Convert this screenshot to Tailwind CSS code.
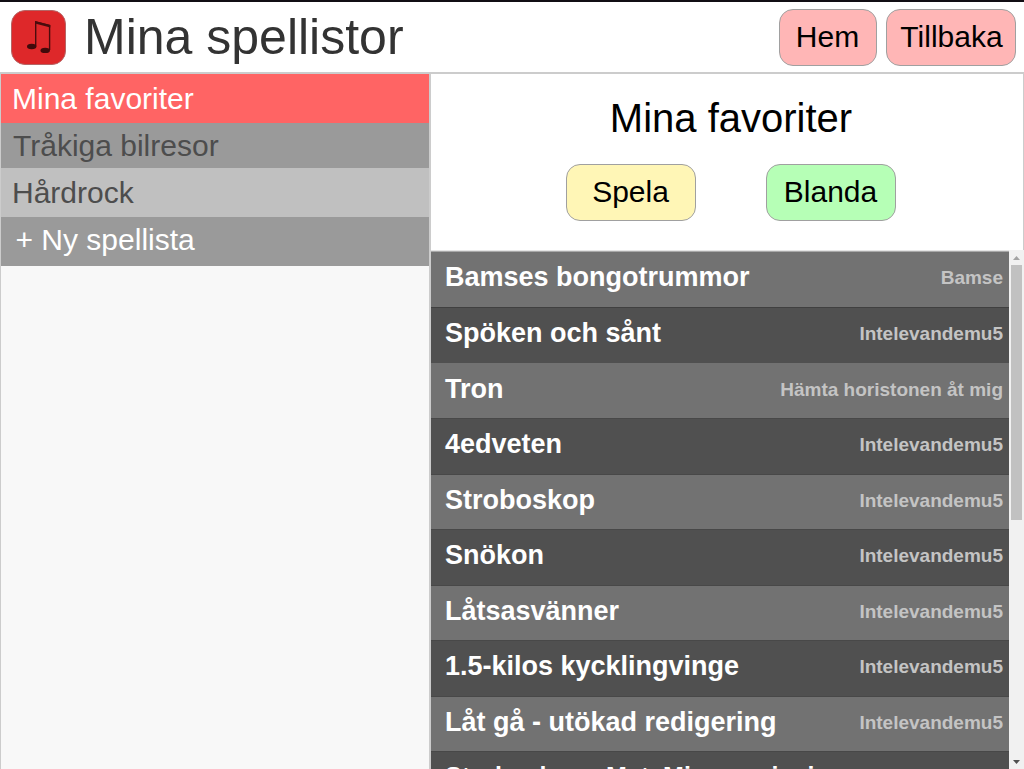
<!DOCTYPE html>
<html lang="sv">
<head>
<meta charset="utf-8">
<title>Mina spellistor</title>
<script src="https://cdn.jsdelivr.net/npm/@tailwindcss/browser@4"></script>
</head>
<body class="h-[769px] w-[1024px] overflow-hidden bg-white font-['Liberation_Sans',Arial,sans-serif]">
<div class="flex h-full flex-col border-t-2 border-[#110e14]">
  <header class="flex h-[70px] shrink-0 items-start pl-[11px] pr-2 pt-[7px]">
    <svg class="mt-px h-[55px] w-[55px] shrink-0" viewBox="0 0 55 55">
      <rect x=".5" y=".5" width="54" height="54" rx="13.5" fill="#de282a" stroke="#b56565"/>
      <path d="M24.7 36.5V12L38.6 15.6V40" fill="none" stroke="#4a0c0d" stroke-width="1.4"/>
      <path d="M24 11L39.3 15.1V17.6L24 13.4Z" fill="#4a0c0d"/>
      <ellipse cx="20.7" cy="36.5" rx="4.7" ry="2.7" fill="#400a0b"/>
      <ellipse cx="34.2" cy="40.4" rx="4.7" ry="2.7" fill="#400a0b"/>
    </svg>
    <h1 class="ml-[18px] text-[50px] leading-[56px] text-[#333]">Mina spellistor</h1>
    <nav class="ml-auto flex gap-[9px] text-[30px] leading-[54px]">
      <button class="h-[57px] w-[98px] rounded-[14px] border border-[#a0a0a0] bg-[#ffb6b6] pb-[2px] pr-px">Hem</button>
      <button class="h-[57px] w-[130px] rounded-[14px] border border-[#a0a0a0] bg-[#ffb6b6] pb-[2px] pl-px">Tillbaka</button>
    </nav>
  </header>
  <main class="flex min-h-0 flex-1">
    <aside class="w-[430px] shrink-0 border-t-2 border-r border-l border-[#ccc] bg-[#f8f8f8] text-[30px]">
      <div class="h-[49px] bg-[#ff6464] pl-[11px] leading-[50px] text-white">Mina favoriter</div>
      <div class="h-[45px] bg-[#9a9a9a] pl-3 leading-[46px] text-[#4d4d4d]">Tråkiga bilresor</div>
      <div class="h-[49px] bg-[#c0c0c0] pl-[11px] leading-[50px] text-[#4d4d4d]">Hårdrock</div>
      <div class="h-[49px] bg-[#9a9a9a] pl-[14.5px] leading-[46px] text-white">+ Ny spellista</div>
    </aside>
    <section class="flex min-w-0 flex-1 flex-col border-l border-[#ccc]">
      <div class="h-[178px] shrink-0 border-t-2 border-r border-[#ccc] pl-2 pt-[21px] text-center">
        <h2 class="text-[40px] leading-[46px]">Mina favoriter</h2>
        <div class="mt-[23px] flex justify-center gap-[70px] text-[30px] leading-[54px]">
          <button class="h-[57px] w-[130px] rounded-[14px] border border-[#a0a0a0] bg-[#fff6b6] pb-[2px] pr-px">Spela</button>
          <button class="h-[57px] w-[130px] rounded-[14px] border border-[#a0a0a0] bg-[#b6ffb6] pb-[2px] pr-px">Blanda</button>
        </div>
      </div>
      <div class="flex min-h-0 flex-1">
        <div class="min-w-0 flex-1 overflow-hidden border-t border-[#e4e4e4] text-[27px] font-bold text-white">
          <div class="flex h-[56px] justify-between border-t border-[#a8a8a8] bg-[#727272] pl-[14px] pr-[6px] leading-[50px]"><span>Bamses bongotrummor</span><span class="text-[19px] leading-[52px] text-[#c4c4c4]">Bamse</span></div>
          <div class="flex h-[56px] justify-between border-t border-[#404040] bg-[#505050] pl-[14px] pr-[6px] leading-[50px]"><span>Spöken och sånt</span><span class="text-[19px] leading-[52px] text-[#c4c4c4]">Intelevandemu5</span></div>
          <div class="flex h-[55px] justify-between bg-[#727272] pl-[14px] pr-[6px] leading-[52px]"><span>Tron</span><span class="text-[19px] leading-[54px] text-[#c4c4c4]">Hämta horistonen åt mig</span></div>
          <div class="flex h-[57px] justify-between border-y border-[#484848] bg-[#505050] pl-[14px] pr-[6px] leading-[50px]"><span>4edveten</span><span class="text-[19px] leading-[52px] text-[#c4c4c4]">Intelevandemu5</span></div>
          <div class="flex h-[54px] justify-between bg-[#727272] pl-[14px] pr-[6px] leading-[50px]"><span>Stroboskop</span><span class="text-[19px] leading-[52px] text-[#c4c4c4]">Intelevandemu5</span></div>
          <div class="flex h-[57px] justify-between border-y border-[#484848] bg-[#505050] pl-[14px] pr-[6px] leading-[50px]"><span>Snökon</span><span class="text-[19px] leading-[52px] text-[#c4c4c4]">Intelevandemu5</span></div>
          <div class="flex h-[54px] justify-between bg-[#727272] pl-[14px] pr-[6px] leading-[50px]"><span>Låtsasvänner</span><span class="text-[19px] leading-[52px] text-[#c4c4c4]">Intelevandemu5</span></div>
          <div class="flex h-[57px] justify-between border-y border-[#484848] bg-[#505050] pl-[14px] pr-[6px] leading-[50px]"><span>1.5-kilos kycklingvinge</span><span class="text-[19px] leading-[52px] text-[#c4c4c4]">Intelevandemu5</span></div>
          <div class="flex h-[54px] justify-between bg-[#727272] pl-[14px] pr-[6px] leading-[50px]"><span>Låt gå - utökad redigering</span><span class="text-[19px] leading-[52px] text-[#c4c4c4]">Intelevandemu5</span></div>
          <div class="flex h-[57px] justify-between border-y border-[#484848] bg-[#505050] pl-[14px] pr-[6px] text-[25px] leading-[48px]"><span>Stroboskop - MatsMixs remixning</span></div>
        </div>
        <div class="flex w-[15px] shrink-0 flex-col items-center bg-[#f1f1f1]">
          <svg class="h-[15px] w-[15px] shrink-0" viewBox="0 0 15 15"><path d="M4 10L7.5 6L11 10Z" fill="#a3a3a3"/></svg>
          <div class="h-[255px] w-[11px] bg-[#c1c1c1]"></div>
          <svg class="mt-auto h-[15px] w-[15px] shrink-0" viewBox="0 0 15 15"><path d="M4 6L7.5 10L11 6Z" fill="#505050"/></svg>
        </div>
      </div>
    </section>
  </main>
</div>
</body>
</html>
